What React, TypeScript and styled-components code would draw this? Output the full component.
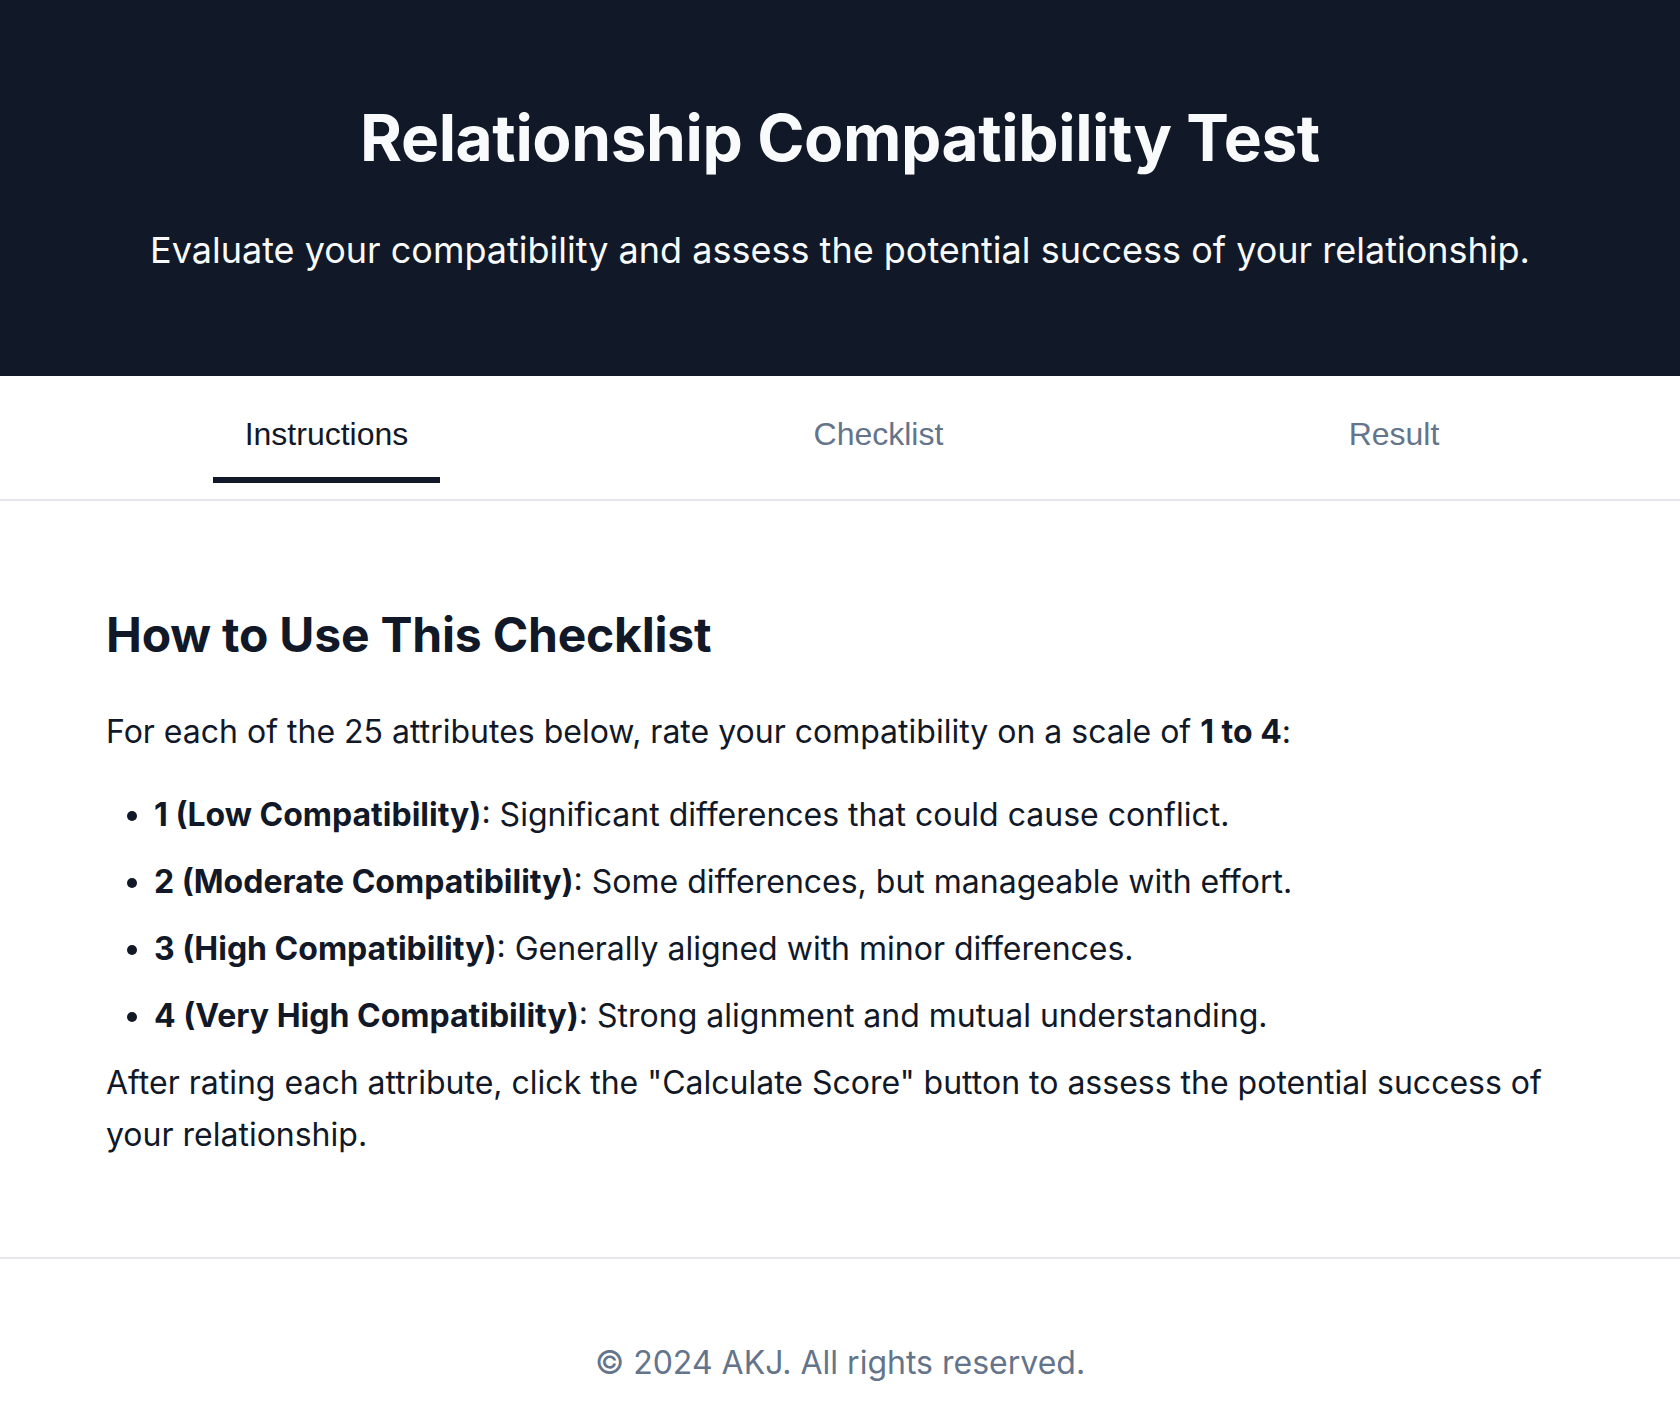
import { useState } from 'react'
import styled, { createGlobalStyle } from 'styled-components'

const GlobalStyle = createGlobalStyle`
  * { box-sizing: border-box; }
  body {
    margin: 0;
    background: #ffffff;
    font-family: Inter, "Noto Sans", sans-serif;
    color: #111827;
  }
`

const tabs = ["Instructions", "Checklist", "Result"]

const levels = [
    { label: "1 (Low Compatibility)", text: "Significant differences that could cause conflict." },
    { label: "2 (Moderate Compatibility)", text: "Some differences, but manageable with effort." },
    { label: "3 (High Compatibility)", text: "Generally aligned with minor differences." },
    { label: "4 (Very High Compatibility)", text: "Strong alignment and mutual understanding." },
]

function App() {
    const [active, setActive] = useState("Instructions")

    return (
        <Page>
            <GlobalStyle />
            <Hero>
                <Title>Relationship Compatibility Test</Title>
                <Subtitle>Evaluate your compatibility and assess the potential success of your relationship.</Subtitle>
            </Hero>
            <TabBar>
                {tabs.map(tab => <TabButton key={tab} $active={tab === active} onClick={() => setActive(tab)}>{tab}</TabButton>)}
            </TabBar>
            <Content>
                <Heading>How to Use This Checklist</Heading>
                <Text>For each of the 25 attributes below, rate your compatibility on a scale of <strong>1 to 4</strong>:</Text>
                <Levels>
                    {levels.map(level => <li key={level.label}><strong>{level.label}</strong>: {level.text}</li>)}
                </Levels>
                <Text>After rating each attribute, click the "Calculate Score" button to assess the potential success of your relationship.</Text>
            </Content>
            <Footer>© 2024 AKJ. All rights reserved.</Footer>
        </Page>
    )
}

const Page = styled.div`
  display: flex;
  flex-direction: column;
  min-height: 100vh;
`

const Hero = styled.header`
  background-color: #111827;
  color: #f9fafb;
  text-align: center;
  padding: 100px 40px 99px;
  display: flex;
  flex-direction: column;
  gap: 46px;
`

const Title = styled.h1`
  margin: 0;
  font-size: 64px;
  line-height: 1.2;
  font-weight: 700;
  letter-spacing: -0.4px;
`

const Subtitle = styled.p`
  margin: 0;
  font-size: 36px;
  line-height: 1.5;
`

const TabBar = styled.nav`
  display: flex;
  justify-content: space-around;
  padding: 16px 38px 16px 42px;
  border-bottom: 2px solid #e5e7eb;
`

const TabButton = styled.button<{ $active: boolean }>`
  font-family: "Liberation Sans", Arial, sans-serif;
  font-size: 32px;
  background: none;
  border: none;
  border-bottom: 6px solid ${({ $active }) => $active ? "#111827" : "transparent"};
  padding: 24px 32px;
  color: ${({ $active }) => $active ? "#111827" : "#64748b"};
  cursor: pointer;
`

const Content = styled.main`
  padding: 105px 106px 97px;
  flex: 1;
`

const Heading = styled.h2`
  margin: 0 0 43px;
  font-size: 48px;
  line-height: 1.2;
  font-weight: 700;
  letter-spacing: -0.2px;
`

const Text = styled.p`
  margin: 0;
  font-size: 32px;
  line-height: 1.6;

  & strong {
    font-weight: 700;
  }
`

const Levels = styled.ul`
  margin: 31px 0 16px;
  padding-left: 48px;
  font-size: 32px;
  line-height: 1.6;

  & > li + li {
    margin-top: 16px;
  }
  & strong {
    font-weight: 700;
  }
`

const Footer = styled.footer`
  border-top: 2px solid #e5e7eb;
  padding: 80px 40px;
  text-align: center;
  font-size: 32px;
  line-height: 1.5;
  color: #64748b;
`

export default App
